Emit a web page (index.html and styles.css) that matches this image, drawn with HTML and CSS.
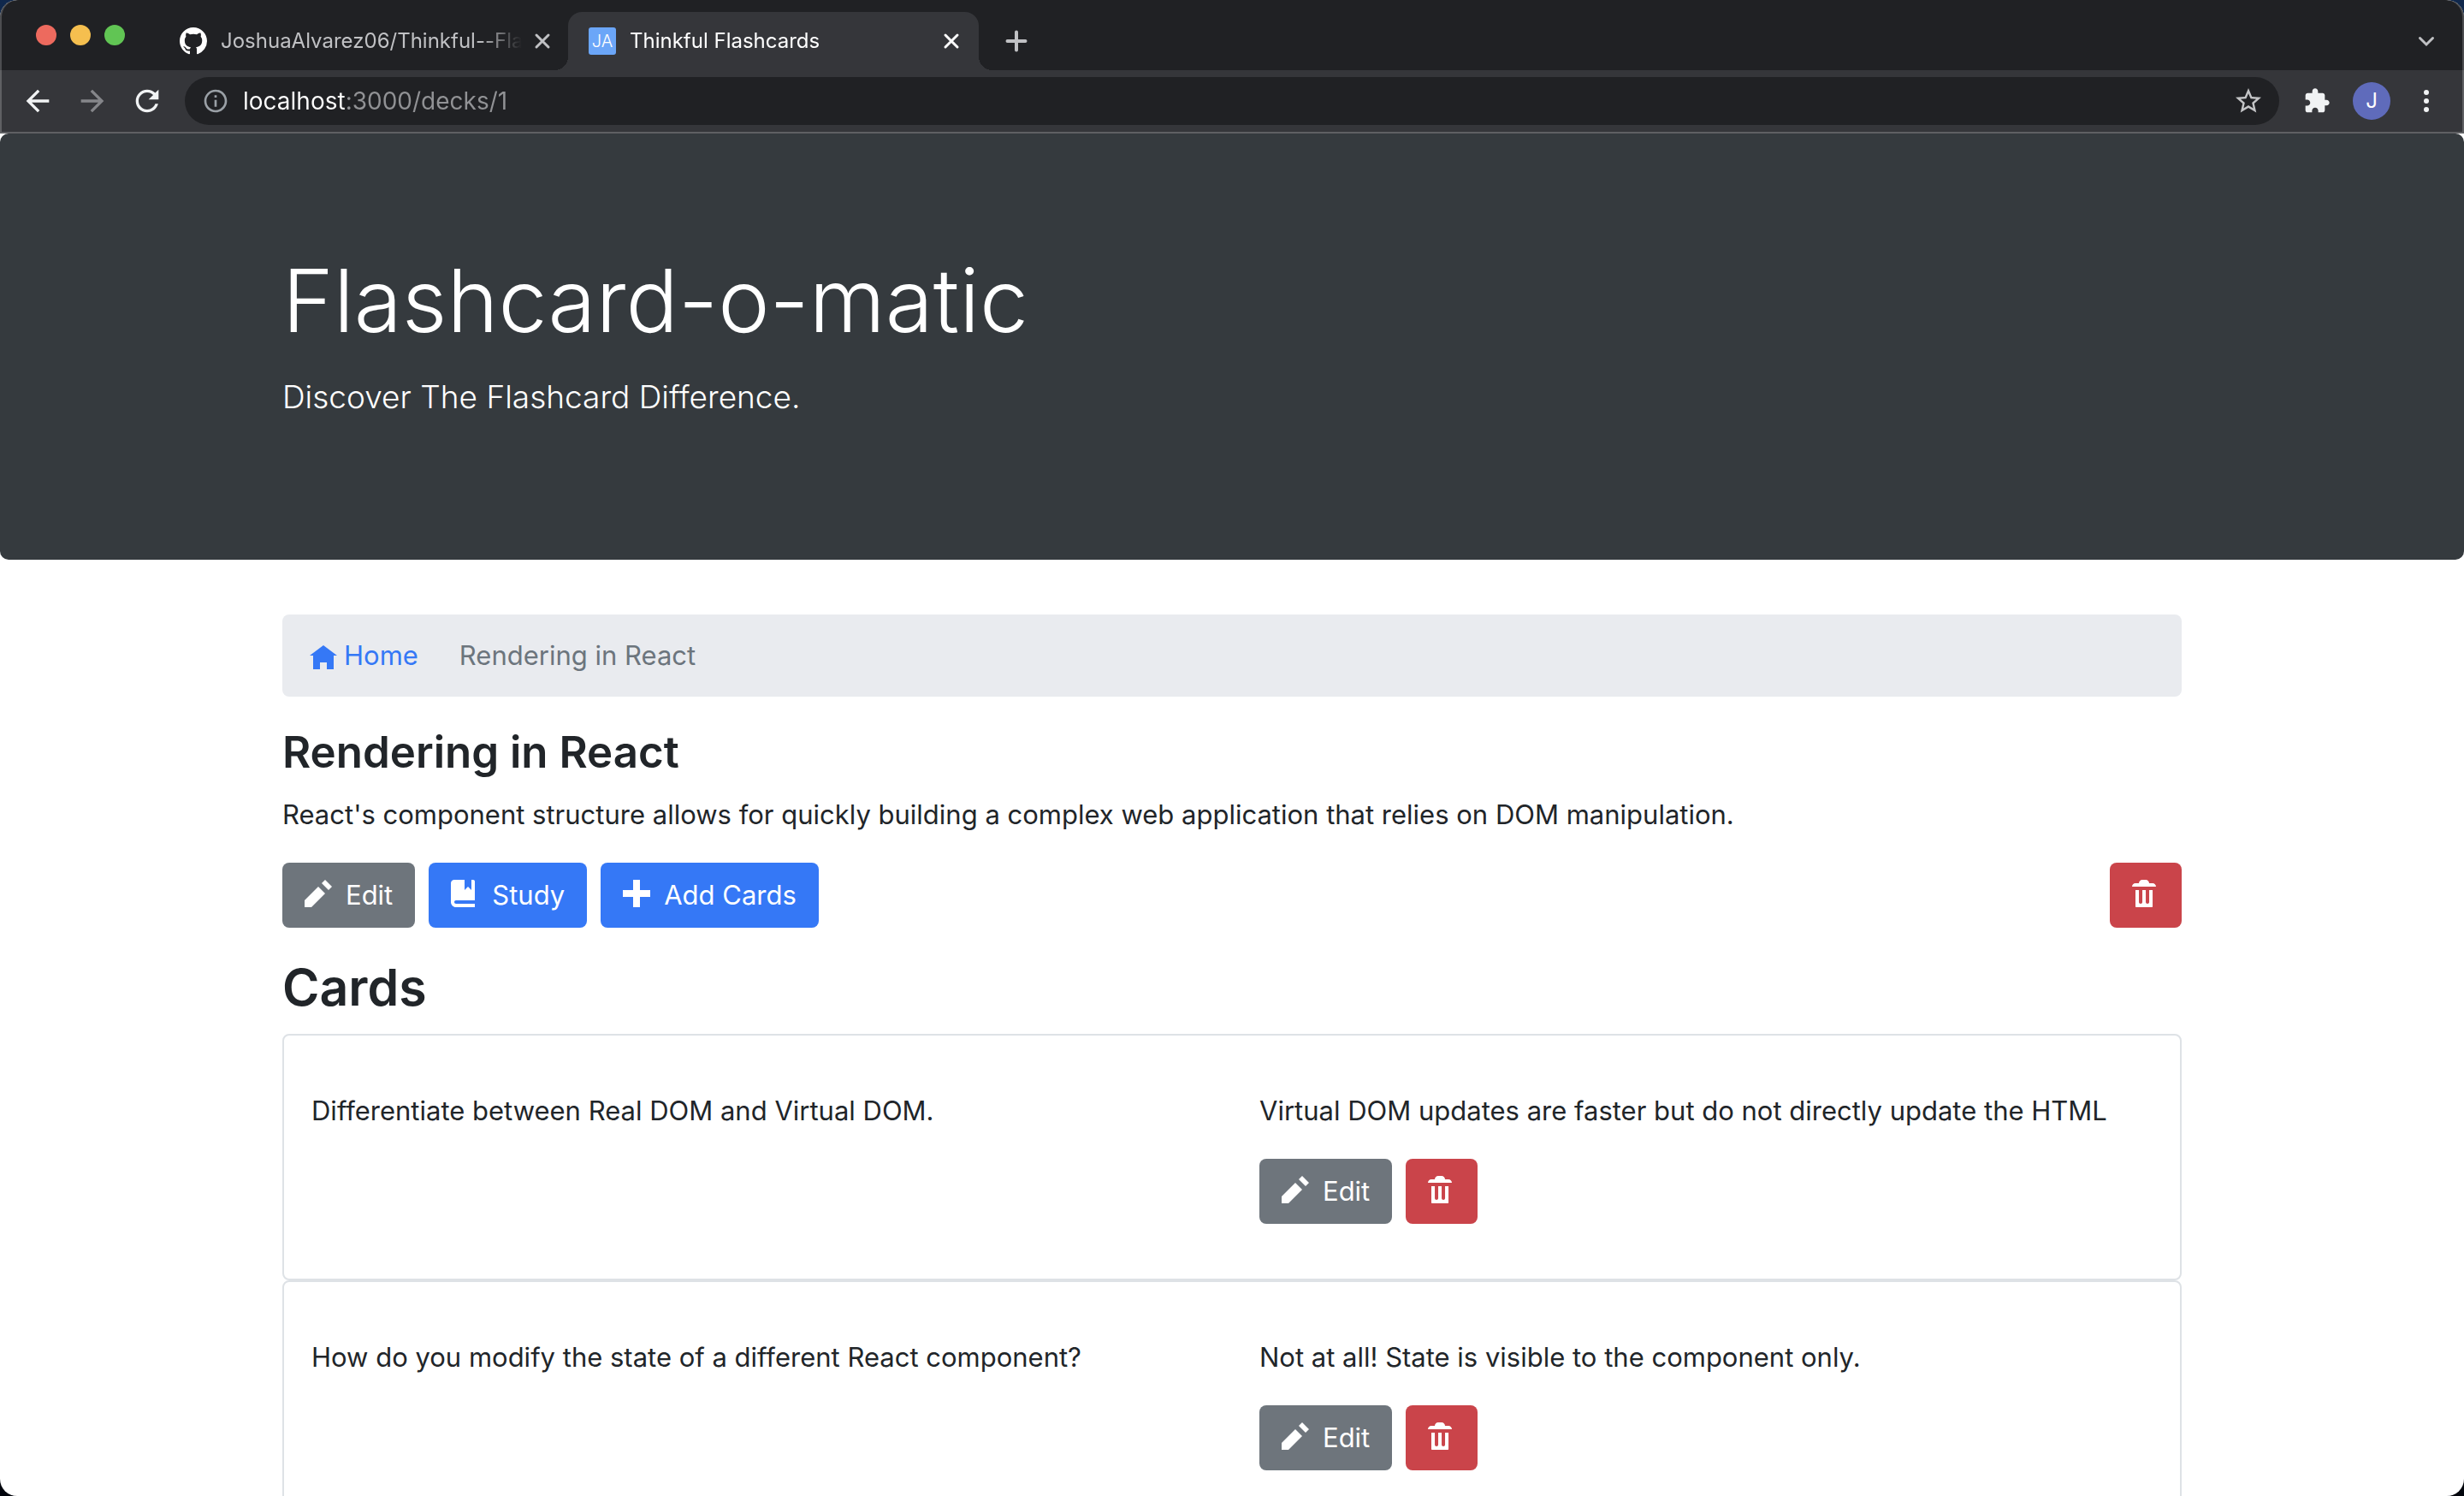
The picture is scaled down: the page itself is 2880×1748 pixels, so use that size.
FILE: index.html
```html
<!DOCTYPE html>
<html lang="en">
<head>
  <meta charset="utf-8">
  <title>Thinkful Flashcards</title>
  <link rel="stylesheet" href="styles.css">
</head>
<body>
  <svg class="sprite" aria-hidden="true">
    <symbol id="pencil" viewBox="0 0 8 8"><path d="M6 0l-1 1 2 2 1-1-2-2zm-2 2l-4 4v2h2l4-4-2-2z"/></symbol>
    <symbol id="book" viewBox="0 0 8 8"><path d="M1 0c-.07 0-.13.01-.19.03-.39.08-.7.39-.78.78-.03.06-.03.12-.03.19v5.5c0 .83.67 1.5 1.5 1.5h5.5v-1h-5.5c-.28 0-.5-.22-.5-.5s.22-.5.5-.5h5.5v-5.5c0-.28-.22-.5-.5-.5h-.5v3l-1-1-1 1v-3h-3z"/></symbol>
    <symbol id="plus" viewBox="0 0 8 8"><path d="M3 0v3h-3v2h3v3h2v-3h3v-2h-3v-3h-2z"/></symbol>
    <symbol id="trash" viewBox="0 0 8 8"><path d="M3 0c-.55 0-1 .45-1 1h-1c-.55 0-1 .45-1 1h7c0-.55-.45-1-1-1h-1c0-.55-.45-1-1-1h-1zm-2 3v4.81c0 .11.08.19.19.19h4.63c.11 0 .19-.08.19-.19v-4.81h-1v3.5c0 .28-.22.5-.5.5s-.5-.22-.5-.5v-3.5h-1v3.5c0 .28-.22.5-.5.5s-.5-.22-.5-.5v-3.5h-1z"/></symbol>
    <symbol id="home" viewBox="0 0 8 8"><path d="M4 0l-4 3h1v4h2v-2h2v2h2v-4.03l1 .03-4-3z"/></symbol>
    <symbol id="close" viewBox="0 0 32 32"><path d="M9 9l14 14M23 9L9 23" fill="none" stroke="currentColor" stroke-width="3" stroke-linecap="round"/></symbol>
  </svg>

  <div class="window">
    <header class="chrome">
      <div class="tabstrip">
        <div class="lights"><span class="light light-close"></span><span class="light light-min"></span><span class="light light-max"></span></div>
        <div class="tabs">
          <div class="tab">
            <svg class="favicon" viewBox="0 0 16 16"><path d="M8 0C3.58 0 0 3.58 0 8c0 3.54 2.29 6.53 5.47 7.59.4.07.55-.17.55-.38 0-.19-.01-.82-.01-1.49-2.01.37-2.53-.49-2.69-.94-.09-.23-.48-.94-.82-1.13-.28-.15-.68-.52-.01-.53.63-.01 1.08.58 1.23.82.72 1.21 1.87.87 2.33.66.07-.52.28-.87.51-1.07-1.78-.2-3.64-.89-3.64-3.95 0-.87.31-1.59.82-2.15-.08-.2-.36-1.02.08-2.12 0 0 .67-.21 2.2.82.64-.18 1.32-.27 2-.27s1.36.09 2 .27c1.53-1.04 2.2-.82 2.2-.82.44 1.1.16 1.92.08 2.12.51.56.82 1.27.82 2.15 0 3.07-1.87 3.75-3.65 3.95.29.25.54.73.54 1.48 0 1.07-.01 1.93-.01 2.2 0 .21.15.46.55.38A8.01 8.01 0 0 0 16 8c0-4.42-3.58-8-8-8z"/></svg>
            <span class="tab-title">JoshuaAlvarez06/Thinkful--Fla</span>
            <button class="tab-close" aria-label="Close tab"><svg class="icon"><use href="#close"/></svg></button>
          </div>
          <div class="tab tab-active">
            <span class="favicon favicon-text">JA</span>
            <span class="tab-title">Thinkful Flashcards</span>
            <button class="tab-close" aria-label="Close tab"><svg class="icon"><use href="#close"/></svg></button>
          </div>
        </div>
        <button class="new-tab" aria-label="New tab"><svg class="icon" viewBox="0 0 32 32"><path d="M16 5.500v21M5.500 16h21" fill="none" stroke="currentColor" stroke-width="4" stroke-linecap="round"/></svg></button>
        <button class="tool tab-search" aria-label="Search tabs"><svg class="icon" viewBox="0 0 32 32"><path d="M8.500 12.500l7.500 7.500 7.500-7.500" fill="none" stroke="currentColor" stroke-width="3" stroke-linecap="round"/></svg></button>
      </div>
      <div class="toolbar">
        <button class="tool" aria-label="Back"><svg class="tool-icon" viewBox="0 0 24 24"><path d="M20 11H7.830l5.590-5.590L12 4l-8 8 8 8 1.410-1.410L7.830 13H20v-2z"/></svg></button>
        <button class="tool tool-off" aria-label="Forward"><svg class="tool-icon" viewBox="0 0 24 24"><path d="M4 11h12.170l-5.590-5.590L12 4l8 8-8 8-1.410-1.410L16.170 13H4v-2z"/></svg></button>
        <button class="tool" aria-label="Reload"><svg class="tool-icon" viewBox="0 0 24 24"><path d="M17.650 6.350C16.200 4.900 14.210 4 12 4c-4.420 0-7.990 3.580-7.990 8s3.570 8 7.990 8c3.730 0 6.840-2.550 7.730-6h-2.080c-.82 2.330-3.040 4-5.650 4-3.310 0-6-2.690-6-6s2.690-6 6-6c1.660 0 3.140.69 4.220 1.780L13 11h7V4l-2.350 2.350z"/></svg></button>
        <div class="omnibox">
          <svg class="icon info" viewBox="0 0 24 24"><path d="M11 7h2v2h-2zm0 4h2v6h-2zm1-9C6.480 2 2 6.480 2 12s4.480 10 10 10 10-4.480 10-10S17.520 2 12 2zm0 18c-4.410 0-8-3.590-8-8s3.590-8 8-8 8 3.590 8 8-3.590 8-8 8z"/></svg>
          <input class="address" type="text" aria-label="Address" value="localhost:3000/decks/1">
          <button class="star" aria-label="Bookmark this page"><svg class="star-icon" viewBox="0 0 24 24"><path d="M22 9.240l-7.190-.62L12 2 9.190 8.630 2 9.240l5.460 4.730L5.820 21 12 17.270 18.180 21l-1.630-7.030L22 9.240zM12 15.400l-3.760 2.270 1-4.280-3.320-2.880 4.380-.38L12 6.100l1.710 4.040 4.380.38-3.320 2.880 1 4.280L12 15.400z"/></svg></button>
        </div>
        <div class="actions">
          <button class="tool" aria-label="Extensions"><svg class="icon" viewBox="0 0 24 24"><path d="M20.500 11H19V7c0-1.100-.9-2-2-2h-4V3.500C13 2.120 11.880 1 10.500 1S8 2.120 8 3.500V5H4c-1.100 0-1.990.9-1.990 2v3.800H3.500c1.490 0 2.700 1.210 2.700 2.700s-1.210 2.700-2.700 2.700H2V20c0 1.100.9 2 2 2h3.800v-1.500c0-1.490 1.210-2.700 2.700-2.700 1.490 0 2.700 1.210 2.700 2.700V22H17c1.100 0 2-.9 2-2v-4h1.500c1.380 0 2.500-1.120 2.500-2.500S21.880 11 20.500 11z"/></svg></button>
          <button class="avatar" aria-label="Profile">J</button>
          <button class="tool" aria-label="Menu"><svg class="icon" viewBox="0 0 32 32"><circle cx="16" cy="6" r="3"/><circle cx="16" cy="16" r="3"/><circle cx="16" cy="26" r="3"/></svg></button>
        </div>
      </div>
    </header>

    <div class="page">
      <header class="jumbotron">
        <div class="container">
          <h1 class="display">Flashcard-o-matic</h1>
          <p class="lead">Discover The Flashcard Difference.</p>
        </div>
      </header>
      <main class="container">
        <nav class="breadcrumb" aria-label="Breadcrumb">
          <a class="crumb" href="#home"><svg class="icon"><use href="#home"/></svg>Home</a>
          <span class="crumb-current">Rendering in React</span>
        </nav>
        <h2 class="deck-title">Rendering in React</h2>
        <p class="text">React's component structure allows for quickly building a complex web application that relies on DOM manipulation.</p>
        <div class="buttons">
          <button class="btn btn-secondary"><svg class="icon"><use href="#pencil"/></svg>Edit</button>
          <button class="btn btn-primary"><svg class="icon"><use href="#book"/></svg>Study</button>
          <button class="btn btn-primary"><svg class="icon"><use href="#plus"/></svg>Add Cards</button>
          <button class="btn btn-danger push-right" aria-label="Delete deck"><svg class="icon"><use href="#trash"/></svg></button>
        </div>
        <h2 class="cards-title">Cards</h2>
        <article class="card">
          <p class="text">Differentiate between Real DOM and Virtual DOM.</p>
          <div>
            <p class="text">Virtual DOM updates are faster but do not directly update the HTML</p>
            <div class="buttons">
              <button class="btn btn-secondary"><svg class="icon"><use href="#pencil"/></svg>Edit</button>
              <button class="btn btn-danger" aria-label="Delete card"><svg class="icon"><use href="#trash"/></svg></button>
            </div>
          </div>
        </article>
        <article class="card">
          <p class="text">How do you modify the state of a different React component?</p>
          <div>
            <p class="text">Not at all! State is visible to the component only.</p>
            <div class="buttons">
              <button class="btn btn-secondary"><svg class="icon"><use href="#pencil"/></svg>Edit</button>
              <button class="btn btn-danger" aria-label="Delete card"><svg class="icon"><use href="#trash"/></svg></button>
            </div>
          </div>
        </article>
      </main>
    </div>
  </div>
</body>
</html>
```
FILE: styles.css
```css
*, *::before, *::after { box-sizing: border-box; }

body {
  margin: 0;
  background: linear-gradient(#10284c, #02050c);
  font-family: Inter, "Liberation Sans", sans-serif;
  font-size: 31px;
  line-height: 48px;
  color: #212529;
}

h1, h2, p { margin: 0; }
svg { display: block; flex: none; fill: currentColor; }
button {
  padding: 0;
  border: 0;
  background: none;
  color: inherit;
  font: inherit;
  cursor: pointer;
}

.sprite { position: absolute; width: 0; height: 0; }
.icon { width: 32px; height: 32px; }

.window {
  display: flex;
  flex-direction: column;
  height: 100vh;
  overflow: hidden;
  border-radius: 20px;
  background: #fff;
}

/* Browser frame */
.chrome {
  flex: none;
  background: #202124;
  color: #c0c1c4;
  border-bottom: 2px solid #5f6063;
  border-radius: 20px 20px 0 0;
  box-shadow: inset 2px 0 0 #4c4d50, inset -2px 0 0 #4c4d50;
}
.tabstrip { display: flex; align-items: center; height: 82px; padding: 14px 24px 0 42px; }
.lights { display: flex; align-self: flex-start; gap: 16px; margin: 15px 40px 0 0; }
.light { width: 24px; height: 24px; border-radius: 50%; }
.light-close { background: #ed6a5e; }
.light-min { background: #f5bf4f; }
.light-max { background: #61c554; }
.tabs { display: flex; }
.tab {
  position: relative;
  display: flex;
  align-items: center;
  width: 480px;
  height: 68px;
  padding: 0 16px 0 24px;
  font-size: 24px;
  line-height: 32px;
}
.tab + .tab { margin-left: -2px; }
.tab-active { background: #35363a; border-radius: 16px 16px 0 0; color: #fff; }
.tab-active::before, .tab-active::after {
  content: "";
  position: absolute;
  bottom: 0;
  width: 16px;
  height: 16px;
}
.tab-active::before { right: 100%; background: radial-gradient(circle at 0 0, transparent 16px, #35363a 16px); }
.tab-active::after { left: 100%; background: radial-gradient(circle at 100% 0, transparent 16px, #35363a 16px); }
.favicon { flex: none; width: 32px; height: 32px; margin-right: 16px; color: #fff; }
.favicon-text { border-radius: 3px; background: #6ba6f8; font-size: 20px; font-weight: 300; text-align: center; }
.tab-title {
  flex: 1;
  min-width: 0;
  margin-right: 8px;
  overflow: hidden;
  white-space: nowrap;
  mask-image: linear-gradient(to left, transparent, #000 48px);
}
.new-tab { display: flex; margin-left: 28px; }
.tool { display: flex; flex: none; align-items: center; justify-content: center; width: 40px; height: 40px; }
.tab-search { margin-left: auto; }

.toolbar {
  display: flex;
  align-items: center;
  gap: 24px;
  height: 72px;
  padding: 0 24px;
  background: #35363a;
  color: #f1f3f4;
  box-shadow: inset 2px 0 0 #5f6063, inset -2px 0 0 #5f6063;
}
.tool-icon { width: 40px; height: 40px; }
.tool-off { color: #85868a; }
.omnibox {
  display: flex;
  flex: 1;
  align-items: center;
  height: 56px;
  padding: 0 18px 0 20px;
  border-radius: 28px;
  background: #202124;
}
.info { margin-right: 16px; color: #9aa0a6; }
/* The host name is bright, the rest of the address is dimmed */
.address {
  flex: 1;
  min-width: 0;
  height: 40px;
  padding: 0;
  border: 0;
  outline: 0;
  background: linear-gradient(to right, #fff 119px, #919295 119px);
  background-clip: text;
  color: transparent;
  font-family: inherit;
  font-size: 28px;
}
.star { color: #c4c5c7; }
.star-icon { width: 36px; height: 36px; }
.actions { display: flex; align-items: center; gap: 22px; }
.avatar {
  width: 44px;
  height: 44px;
  border-radius: 50%;
  background: #5f6bbb;
  color: #fff;
  font-size: 24px;
  line-height: 44px;
}

/* Page */
.page { flex: 1; min-height: 0; overflow-y: auto; scrollbar-width: none; }
.container { width: 100%; max-width: 2280px; margin: 0 auto; padding: 0 30px; }
.jumbotron { margin-bottom: 64px; padding: 128px 0 160px; border-radius: 10px; background: #353a3e; color: #fff; }
.display { margin-bottom: 16px; font-size: 102px; font-weight: 300; line-height: 134px; }
.lead { font-size: 37px; font-weight: 300; line-height: 60px; }

.breadcrumb {
  display: flex;
  gap: 48px;
  margin-bottom: 32px;
  padding: 24px 32px;
  border-radius: 8px;
  background: #e9ebef;
  color: #6c757d;
}
.crumb { display: flex; align-items: center; gap: 8px; color: #3578f6; text-decoration: none; }
.crumb .icon { margin-top: 8px; }
.deck-title { margin-bottom: 16px; font-size: 51px; font-weight: 600; line-height: 66px; }
.cards-title { margin: 32px 0 16px; font-size: 59px; font-weight: 600; line-height: 76px; }
.text { margin-bottom: 32px; }

.buttons { display: flex; gap: 16px; }
.btn {
  display: flex;
  gap: 16px;
  height: 76px;
  padding: 14px 26px;
  border-radius: 8px;
  color: #fff;
}
.btn .icon { margin-top: 6px; }
.btn-primary { background: #3578f6; }
.btn-secondary { background: #6e757c; }
.btn-danger { background: #ca444a; }
.push-right { margin-left: auto; }

.card {
  display: grid;
  grid-template-columns: 1fr 1fr;
  padding: 64px 0;
  border: 2px solid #dee2e6;
  border-radius: 8px;
}
.card > * { padding: 0 32px; }
```
